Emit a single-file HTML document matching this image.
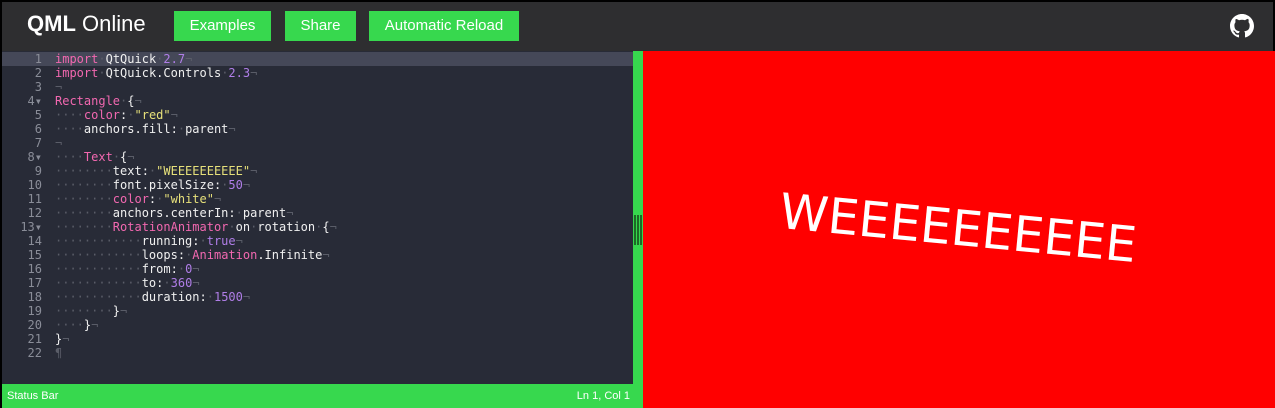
<!DOCTYPE html>
<html><head><meta charset="utf-8"><style>
*{margin:0;padding:0;box-sizing:border-box}
body{width:1275px;height:408px;background:#000;overflow:hidden;position:relative;font-family:"DejaVu Sans","Liberation Sans",sans-serif}
#hdr{position:absolute;left:2px;top:2px;width:1271px;height:49px;background:#2e2e30}
.logo{position:absolute;left:25px;top:9px;color:#fff;font-size:22px;font-family:"Liberation Sans",sans-serif}
.logo b{font-weight:bold}
.btn{position:absolute;top:9px;height:30px;background:#37d84e;color:#fff;font-size:15px;line-height:30px;text-align:center;font-family:"Liberation Sans",sans-serif}
#ed{position:absolute;left:2px;top:51px;width:631px;height:333px;background:#282b37;font-family:"DejaVu Sans Mono","Liberation Mono",monospace;font-size:12px;line-height:14px;color:#f0f0f0}
.act{position:absolute;left:0;top:1px;width:631px;height:14px;background:#454858}
.ln{position:absolute;left:0;top:1px;width:40px;text-align:right;color:#8a8d98;white-space:pre}
.code{position:absolute;left:53px;top:1px;white-space:pre}
.k{color:#f268b0}.n{color:#b07ee8}.s{color:#e6e07a}.d{color:#5a5d68}
#split{position:absolute;left:633px;top:51px;width:10px;height:357px;background:#37d84e}
#split i{position:absolute;top:164px;width:2px;height:30px;background:#1c6b26}
#red{position:absolute;left:643px;top:51px;width:632px;height:357px;background:#f00;overflow:hidden}
#red span{position:absolute;left:136px;top:149px;font-size:49px;color:#fff;transform:rotate(5.5deg);transform-origin:center;white-space:nowrap}
#sb{position:absolute;left:2px;top:384px;width:641px;height:24px;background:#37d84e;color:#fff;font-size:11px;line-height:24px;font-family:"Liberation Sans",sans-serif}
</style></head><body>
<div id="hdr">
<div class="logo"><b>QML</b> Online</div>
<div class="btn" style="left:172px;width:97px">Examples</div>
<div class="btn" style="left:283px;width:71px">Share</div>
<div class="btn" style="left:367px;width:150px">Automatic Reload</div>
<svg style="position:absolute;left:1228px;top:12px" width="24" height="24" viewBox="0 0 16 16"><path fill="#fff" d="M8 0C3.580 0 0 3.58 0 8c0 3.54 2.29 6.53 5.47 7.590.4.07.55-.17.55-.38 0-.19-.01-.82-.01-1.49-2.01.37-2.530-.49-2.69-.94-.09-.23-.48-.94-.82-1.13-.28-.15-.68-.52-.01-.53.63-.01 1.08.58 1.23.82.72 1.21 1.87.87 2.33.66.07-.52.28-.87.51-1.07-1.78-.2-3.64-.89-3.64-3.95 0-.87.31-1.59.82-2.15-.08-.2-.36-1.020.08-2.12 0 0 .67-.21 2.2.82.64-.18 1.32-.27 2-.27.68 0 1.36.09 2 .27 1.53-1.04 2.2-.82 2.2-.82.44 1.1.16 1.92.08 2.12.51.56.82 1.27.82 2.15 0 3.07-1.87 3.75-3.65 3.95.29.25.54.73.54 1.48 0 1.07-.01 1.93-.01 2.2 0 .21.15.46.55.38A8.013 8.013 0 0016 8c0-4.42-3.58-8-8-8z"/></svg>
</div>
<div id="ed">
<div class="act"></div>
<div class="ln">1
2
3
4▾
5
6
7
8▾
9
10
11
12
13▾
14
15
16
17
18
19
20
21
22</div>
<div class="code"><span class="k">import</span><span class="d">·</span>QtQuick<span class="d">·</span><span class="n">2.7</span><span class="d">¬</span>
<span class="k">import</span><span class="d">·</span>QtQuick.Controls<span class="d">·</span><span class="n">2.3</span><span class="d">¬</span>
<span class="d">¬</span>
<span class="k">Rectangle</span><span class="d">·</span>{<span class="d">¬</span>
<span class="d">····</span><span class="k">color</span>:<span class="d">·</span><span class="s">"red"</span><span class="d">¬</span>
<span class="d">····</span>anchors.fill:<span class="d">·</span>parent<span class="d">¬</span>
<span class="d">¬</span>
<span class="d">····</span><span class="k">Text</span><span class="d">·</span>{<span class="d">¬</span>
<span class="d">········</span>text:<span class="d">·</span><span class="s">"WEEEEEEEEEE"</span><span class="d">¬</span>
<span class="d">········</span>font.pixelSize:<span class="d">·</span><span class="n">50</span><span class="d">¬</span>
<span class="d">········</span><span class="k">color</span>:<span class="d">·</span><span class="s">"white"</span><span class="d">¬</span>
<span class="d">········</span>anchors.centerIn:<span class="d">·</span>parent<span class="d">¬</span>
<span class="d">········</span><span class="k">RotationAnimator</span><span class="d">·</span>on<span class="d">·</span>rotation<span class="d">·</span>{<span class="d">¬</span>
<span class="d">············</span>running:<span class="d">·</span><span class="n">true</span><span class="d">¬</span>
<span class="d">············</span>loops:<span class="d">·</span><span class="k">Animation</span>.Infinite<span class="d">¬</span>
<span class="d">············</span>from:<span class="d">·</span><span class="n">0</span><span class="d">¬</span>
<span class="d">············</span>to:<span class="d">·</span><span class="n">360</span><span class="d">¬</span>
<span class="d">············</span>duration:<span class="d">·</span><span class="n">1500</span><span class="d">¬</span>
<span class="d">········</span>}<span class="d">¬</span>
<span class="d">····</span>}<span class="d">¬</span>
}<span class="d">¬</span>
<span class="d">¶</span></div>
</div>
<div id="split"><i style="left:1px"></i><i style="left:4px"></i><i style="left:7px"></i></div>
<div id="red"><span>WEEEEEEEEEE</span></div>
<div id="sb"><span style="position:absolute;left:5px">Status Bar</span><span style="position:absolute;right:13px">Ln 1, Col 1</span></div>
</body></html>
